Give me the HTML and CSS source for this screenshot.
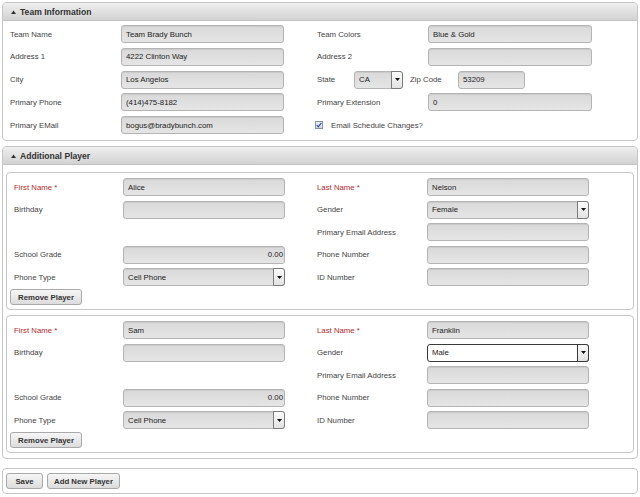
FILE: index.html
```html
<!DOCTYPE html>
<html>
<head>
<meta charset="utf-8">
<link rel="stylesheet" href="styles.css">
</head>
<body>
<div class="page">
  <section class="panel">
    <div class="panel-head"><svg class="caret" width="5" height="4" viewBox="0 0 5 4"><path d="M0 4 L2.5 0.5 L5 4 Z" fill="#333"/></svg><span>Team Information</span></div>
    <div class="team-grid">
      <div class="lbl c1">Team Name</div>
      <div class="field c2">Team Brady Bunch</div>
      <div class="lbl c4">Team Colors</div>
      <div class="field c5">Blue &amp; Gold</div>

      <div class="lbl c1">Address 1</div>
      <div class="field c2">4222 Clinton Way</div>
      <div class="lbl c4">Address 2</div>
      <div class="field c5"></div>

      <div class="lbl c1">City</div>
      <div class="field c2">Los Angelos</div>
      <div class="state-row c45">
        <span class="lbl state-lbl">State</span>
        <div class="field select state-sel"><span class="val">CA</span><span class="arrow"><svg width="5" height="3" viewBox="0 0 5 3"><path d="M0 0 H5 L2.5 3 Z" fill="#111"/></svg></span></div>
        <span class="lbl zip-lbl">Zip Code</span>
        <div class="field zip">53209</div>
      </div>

      <div class="lbl c1">Primary Phone</div>
      <div class="field c2">(414)475-8182</div>
      <div class="lbl c4">Primary Extension</div>
      <div class="field c5">0</div>

      <div class="lbl c1">Primary EMail</div>
      <div class="field c2">bogus@bradybunch.com</div>
      <div class="check-row c45">
        <span class="checkbox"><svg width="6" height="6" viewBox="0 0 6 6"><path d="M0.8 3.2 L2.3 4.9 L5.3 0.8" fill="none" stroke="#2a4fa8" stroke-width="1.2"/></svg></span>
        <span class="lbl">Email Schedule Changes?</span>
      </div>
    </div>
  </section>

  <section class="panel players">
    <div class="panel-head"><svg class="caret" width="5" height="4" viewBox="0 0 5 4"><path d="M0 4 L2.5 0.5 L5 4 Z" fill="#333"/></svg><span>Additional Player</span></div>
    <div class="players-body">
      <div class="player">
        <div class="player-grid">
          <div class="lbl req c1">First Name *</div>
          <div class="field c2">Alice</div>
          <div class="lbl req c4">Last Name *</div>
          <div class="field c5">Nelson</div>

          <div class="lbl c1">Birthday</div>
          <div class="field c2"></div>
          <div class="lbl c4">Gender</div>
          <div class="field select c5"><span class="val">Female</span><span class="arrow"><svg width="5" height="3" viewBox="0 0 5 3"><path d="M0 0 H5 L2.5 3 Z" fill="#111"/></svg></span></div>

          <div class="lbl c4">Primary Email Address</div>
          <div class="field c5"></div>

          <div class="lbl c1">School Grade</div>
          <div class="field num c2">0.00</div>
          <div class="lbl c4">Phone Number</div>
          <div class="field c5"></div>

          <div class="lbl c1">Phone Type</div>
          <div class="field select c2"><span class="val">Cell Phone</span><span class="arrow"><svg width="5" height="3" viewBox="0 0 5 3"><path d="M0 0 H5 L2.5 3 Z" fill="#111"/></svg></span></div>
          <div class="lbl c4">ID Number</div>
          <div class="field c5"></div>
        </div>
        <button class="btn remove">Remove Player</button>
      </div>

      <div class="player">
        <div class="player-grid">
          <div class="lbl req c1">First Name *</div>
          <div class="field c2">Sam</div>
          <div class="lbl req c4">Last Name *</div>
          <div class="field c5">Franklin</div>

          <div class="lbl c1">Birthday</div>
          <div class="field c2"></div>
          <div class="lbl c4">Gender</div>
          <div class="field select focus c5"><span class="val">Male</span><span class="arrow"><svg width="5" height="3" viewBox="0 0 5 3"><path d="M0 0 H5 L2.5 3 Z" fill="#111"/></svg></span></div>

          <div class="lbl c4">Primary Email Address</div>
          <div class="field c5"></div>

          <div class="lbl c1">School Grade</div>
          <div class="field num c2">0.00</div>
          <div class="lbl c4">Phone Number</div>
          <div class="field c5"></div>

          <div class="lbl c1">Phone Type</div>
          <div class="field select c2"><span class="val">Cell Phone</span><span class="arrow"><svg width="5" height="3" viewBox="0 0 5 3"><path d="M0 0 H5 L2.5 3 Z" fill="#111"/></svg></span></div>
          <div class="lbl c4">ID Number</div>
          <div class="field c5"></div>
        </div>
        <button class="btn remove">Remove Player</button>
      </div>
    </div>
  </section>

  <section class="panel actions">
    <button class="btn save">Save</button>
    <button class="btn add">Add New Player</button>
  </section>
</div>
</body>
</html>
```
FILE: styles.css
```css
* { box-sizing: border-box; }

body {
  margin: 0;
  background: #ffffff;
  font-family: "Liberation Sans", Arial, sans-serif;
  font-size: 7.8px;
  color: #444444;
}

.page {
  padding: 2px;
  display: flex;
  flex-direction: column;
}

.panel {
  border: 1px solid #c6c6c6;
  border-radius: 4px;
  overflow: hidden;
  background: #ffffff;
}

.panel.players { margin-top: 5px; }

.panel-head {
  height: 18px;
  display: flex;
  align-items: center;
  gap: 4px;
  padding-left: 8px;
  background: linear-gradient(#efefef, #d2d2d2);
  border-bottom: 1px solid #c2c2c2;
  font-weight: bold;
  font-size: 8.6px;
  color: #333333;
}

.caret { display: block; }

.team-grid {
  padding: 4px 0 6px 7px;
  display: grid;
  grid-template-columns: 111px 163px 33px 111px 164px;
  grid-auto-rows: 18px;
  row-gap: 4.75px;
  align-items: center;
}

.players-body {
  padding: 7px 3px 5px 3px;
  display: flex;
  flex-direction: column;
  gap: 5px;
}

.player {
  border: 1px solid #c6c6c6;
  border-radius: 4px;
  padding: 5px 0 4px 7px;
}

.player-grid {
  display: grid;
  grid-template-columns: 109px 162px 32px 110px 162px;
  grid-auto-rows: 18px;
  row-gap: 4.5px;
  align-items: center;
}

.c1 { grid-column: 1; }
.c2 { grid-column: 2; }
.c4 { grid-column: 4; }
.c5 { grid-column: 5; }
.c45 { grid-column: 4 / 6; }

.lbl {
  color: #444444;
  white-space: nowrap;
}

.lbl.req { color: #b52a2a; }

.field {
  height: 18px;
  display: flex;
  align-items: center;
  padding: 0 4px;
  border: 1px solid #b4b4b4;
  border-radius: 3px;
  background: linear-gradient(#d9d9d9, #e5e5e5);
  box-shadow: inset 0 1px 1px rgba(0, 0, 0, 0.07);
  color: #222222;
  white-space: nowrap;
  overflow: visible;
}

.field.num {
  justify-content: flex-end;
  padding-right: 1px;
}

.select { padding-right: 0; }

.select .val { flex: 1; }

.select .arrow {
  align-self: stretch;
  width: 12px;
  margin: -1px -1px -1px 0;
  display: flex;
  align-items: center;
  justify-content: center;
  border: 1px solid #7c7c7c;
  border-radius: 0 3px 3px 0;
  background: linear-gradient(#fbfbfb, #e2e2e2);
}

.select.focus {
  background: #ffffff;
  border-color: #3a3a3a;
  box-shadow: none;
}

.select.focus .arrow { border-color: #3a3a3a; }

.state-row {
  display: flex;
  align-items: center;
  height: 18px;
}

.state-lbl { width: 37px; }

.state-sel { width: 49px; }

.zip-lbl {
  margin-left: 7px;
  width: 48px;
}

.zip { width: 67px; }

.check-row {
  display: flex;
  align-items: center;
  gap: 8px;
  margin-left: -2px;
}

.checkbox {
  width: 8px;
  height: 8px;
  display: flex;
  align-items: center;
  justify-content: center;
  border: 1px solid #8595a6;
  background: linear-gradient(#eef2f6, #cfd8e2);
}

.btn {
  height: 16px;
  padding: 0 7px;
  border: 1px solid #a9a9a9;
  border-radius: 3px;
  background: linear-gradient(#f6f6f6, #dcdcdc);
  font-family: "Liberation Sans", Arial, sans-serif;
  font-size: 7.8px;
  font-weight: bold;
  color: #333333;
  cursor: pointer;
}

.btn.remove {
  display: block;
  margin: 3px 0 0 -4px;
  width: 72px;
}

.panel.actions {
  margin-top: 9px;
  padding: 4px 3px;
  display: flex;
  gap: 4px;
}

.btn.save { width: 37px; padding: 0; }
.btn.add { width: 73px; padding: 0; }
```
